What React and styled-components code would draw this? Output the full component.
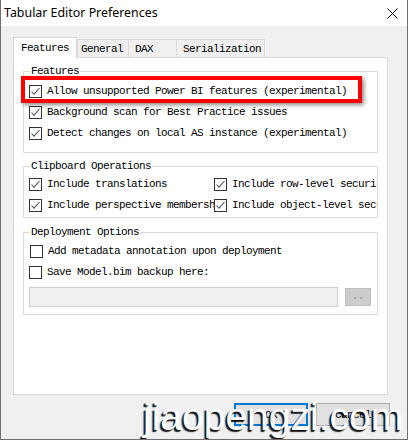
import React from "react";
import styled, { createGlobalStyle } from "styled-components";

const Global = createGlobalStyle`
  html, body { margin: 0; padding: 0; background: #ffffff; }
  * { box-sizing: border-box; }
`;

const MONO = `"Liberation Mono", "DejaVu Sans Mono", monospace`;

const Window = styled.div`
  position: relative;
  width: 408px;
  height: 440px;
  border: 1px solid #6f6f6f;
  border-top: none;
  background: #f0f0f0;
  display: flex;
  flex-direction: column;
  overflow: hidden;
`;

const TitleBar = styled.div`
  height: 26px;
  background: #ffffff;
  display: flex;
  align-items: center;
  justify-content: space-between;
  padding: 0 9px 0 3px;
`;

const Title = styled.span`
  font-family: "Noto Sans", "Open Sans", sans-serif;
  font-size: 12.4px;
  line-height: 26px;
  color: #000;
`;

const Body = styled.div`
  flex: 1;
  display: flex;
  flex-direction: column;
  padding: 11px 19px 0 12px;
  font-family: ${MONO};
  font-size: 11px;
  letter-spacing: -0.6px;
  color: #000;
`;

const TabStrip = styled.div`
  display: flex;
  align-items: flex-end;
  height: 20px;
`;

const Tab = styled.div`
  position: relative;
  width: ${(p) => p.$w}px;
  margin-left: ${(p) => p.$ml || 0}px;
  padding-left: ${(p) => p.$pl}px;
  border: 1px solid #d9d9d9;
  border-bottom: none;
  white-space: nowrap;
  ${(p) =>
    p.$active
      ? `
    height: 21px;
    margin-bottom: -1px;
    padding-top: 1px;
    line-height: 18px;
    background: #ffffff;
    z-index: 1;
  `
      : `
    height: 18px;
    padding-top: 2px;
    line-height: 15px;
    background: #f0f0f0;
  `}
`;

const Panel = styled.div`
  height: 338px;
  border: 1px solid #d9d9d9;
  background: #ffffff;
  padding: 13px 9px 0 9px;
  display: flex;
  flex-direction: column;
`;

const Group = styled.div`
  position: relative;
  margin-top: ${(p) => p.$mt}px;
  border: 1px solid #dcdcdc;
  padding: ${(p) => p.$pt}px 0 ${(p) => p.$pb}px 5px;
`;

const Legend = styled.span`
  position: absolute;
  top: -7px;
  left: 6px;
  padding: 0 1px;
  background: #ffffff;
  line-height: 12px;
  white-space: nowrap;
`;

const Highlight = styled.div`
  position: absolute;
  left: -3px;
  top: 4px;
  width: 341px;
  height: 27px;
  border: 4px solid #ff0000;
  box-shadow: 2px 2px 4px rgba(0, 0, 0, 0.45);
  pointer-events: none;
`;

const Row = styled.div`
  display: flex;
  height: 21px;
  overflow: hidden;
`;

const Check = styled.label`
  display: flex;
  align-items: center;
  height: 21px;
  width: ${(p) => (p.$w ? `${p.$w}px` : "auto")};
  flex: ${(p) => (p.$w ? "none" : "1")};
  min-width: 0;
  overflow: hidden;
  white-space: nowrap;
  line-height: 21px;
  padding-left: ${(p) => p.$pl || 0}px;
`;

const Box = styled.span`
  flex: none;
  width: 13px;
  height: 13px;
  border: 1px solid #333333;
  background: #ffffff;
  display: flex;
  align-items: center;
  justify-content: center;
  margin-right: 5px;
`;

const BrowseRow = styled.div`
  display: flex;
  align-items: flex-start;
  margin-top: 4px;
  gap: 7px;
`;

const TextBox = styled.div`
  width: 309px;
  height: 20px;
  border: 1px solid #cfcfcf;
  background: #f0f0f0;
`;

const SmallButton = styled.div`
  width: 26px;
  height: 18px;
  margin-top: 1px;
  border: 1px solid #bfbfbf;
  background: #cccccc;
  color: #838383;
  font-size: 10px;
  line-height: 16px;
  text-align: center;
  letter-spacing: 0;
`;

const ButtonRow = styled.div`
  display: flex;
  justify-content: flex-end;
  gap: 8px;
  margin-top: 8px;
  margin-right: -2px;
`;

const Button = styled.div`
  width: 74px;
  height: 23px;
  border: ${(p) => (p.$primary ? "2px solid #0078d7" : "1px solid #adadad")};
  background: #e1e1e1;
  display: flex;
  align-items: center;
  justify-content: center;
  font-size: 11px;
`;

const Watermark = styled.div`
  position: absolute;
  left: 142px;
  top: 397px;
  font-family: "Liberation Sans", Arial, sans-serif;
  font-size: 39px;
  line-height: 39px;
  color: #ffffff;
  letter-spacing: 0;
  text-shadow: -2px 2px 1px rgba(0, 0, 0, 0.85), -1px 1px 0 rgba(0, 0, 0, 0.6);
  white-space: nowrap;
  pointer-events: none;
`;

const CheckMark = () => (
  <svg width="11" height="11" viewBox="0 0 11 11">
    <path d="M1.5 5.5 L4 8.2 L9.5 2" fill="none" stroke="#555" strokeWidth="1.1" />
  </svg>
);

const CloseIcon = () => (
  <svg width="11" height="11" viewBox="0 0 11 11">
    <path d="M0.5 0.5 L10.5 10.5 M10.5 0.5 L0.5 10.5" stroke="#000" strokeWidth="1" />
  </svg>
);

const CheckBox = ({ checked, children, w, pl }) => (
  <Check $w={w} $pl={pl}>
    <Box>{checked && <CheckMark />}</Box>
    <span>{children}</span>
  </Check>
);

export default function App() {
  return (
    <>
      <Global />
      <Window>
        <TitleBar>
          <Title>Tabular Editor Preferences</Title>
          <CloseIcon />
        </TitleBar>
        <Body>
          <TabStrip>
            <Tab $active $w={64} $pl={7}>Features</Tab>
            <Tab $w={52} $pl={3}>General</Tab>
            <Tab $w={49} $ml={-1} $pl={6}>DAX</Tab>
            <Tab $w={89} $ml={-1} $pl={6}>Serialization</Tab>
          </TabStrip>
          <Panel>
            <Group $mt={0} $pt={9} $pb={8}>
              <Legend>Features</Legend>
              <Row>
                <CheckBox checked>Allow unsupported Power BI features (experimental)</CheckBox>
              </Row>
              <Row>
                <CheckBox checked>Background scan for Best Practice issues</CheckBox>
              </Row>
              <Row>
                <CheckBox checked>Detect changes on local AS instance (experimental)</CheckBox>
              </Row>
              <Highlight />
            </Group>
            <Group $mt={13} $pt={7} $pb={1}>
              <Legend>Clipboard Operations</Legend>
              <Row>
                <CheckBox checked w={185}>Include translations</CheckBox>
                <CheckBox checked>Include row-level security</CheckBox>
              </Row>
              <Row>
                <CheckBox checked w={185}>Include perspective membership</CheckBox>
                <CheckBox checked>Include object-level security</CheckBox>
              </Row>
            </Group>
            <Group $mt={14} $pt={8} $pb={7}>
              <Legend>Deployment Options</Legend>
              <Row>
                <CheckBox pl={1}>Add metadata annotation upon deployment</CheckBox>
              </Row>
              <Row>
                <CheckBox>Save Model.bim backup here:</CheckBox>
              </Row>
              <BrowseRow>
                <TextBox />
                <SmallButton>..</SmallButton>
              </BrowseRow>
            </Group>
          </Panel>
          <ButtonRow>
            <Button $primary>OK</Button>
            <Button>Cancel</Button>
          </ButtonRow>
        </Body>
        <Watermark>jiaopengzi.com</Watermark>
      </Window>
    </>
  );
}
